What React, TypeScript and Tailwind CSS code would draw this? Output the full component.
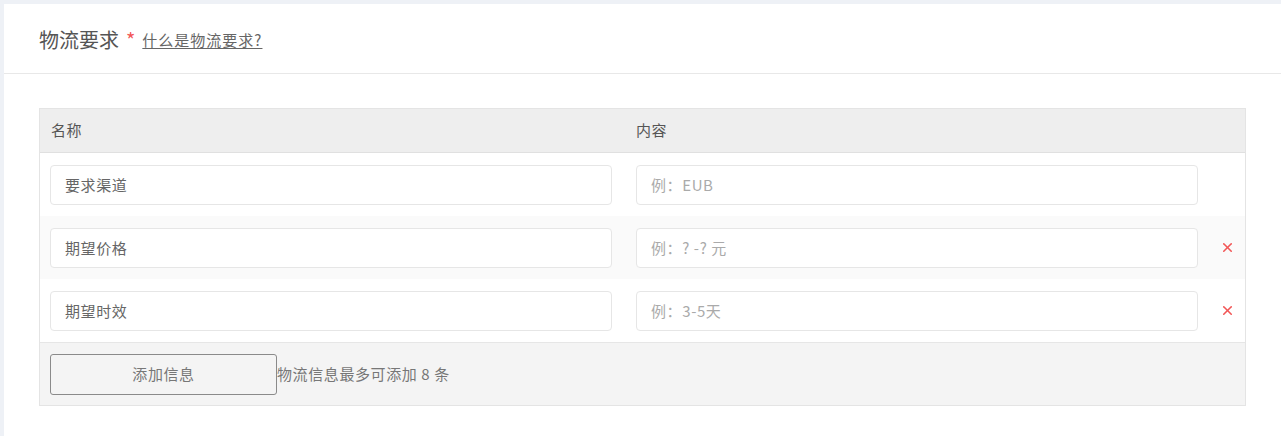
import { X } from 'lucide-react'

interface Row { name: string; placeholder: string; removable: boolean }

const rows: Row[] = [
  { name: '要求渠道', placeholder: '例：EUB',      removable: false },
  { name: '期望价格', placeholder: '例：? -? 元',  removable: true },
  { name: '期望时效', placeholder: '例：3-5天',    removable: true },
]

const font = { fontFamily: '"Noto Sans CJK SC", "Noto Sans", sans-serif' }

export default function App() {
  const inputCls = `h-[40px] w-full px-[14px] border border-[#e6e6e6] rounded-[4px] bg-white
    text-[15px] tracking-[0.6px] text-[#666] placeholder:text-[#aaa] focus:outline-none`

  return (
    <div className="min-h-screen bg-[#eef1f6] pt-[4px] pl-[4px]" style={font}>
      <div className="bg-white min-h-[432px]">
        {/* En-tête */}
        <div className="h-[70px] flex items-center px-[35px] border-b border-[#e8e8e8]">
          <h2 className="text-[20px] text-[#555] mt-[2px]">物流要求</h2>
          <span className="text-[#f25757] text-[20px] ml-[7px] mr-[7px] mt-[2px]">*</span>
          <a href="#" className="text-[15px] tracking-[1px] text-[#666] underline underline-offset-2 pr-[6px] mt-[4px]">什么是物流要求?</a>
        </div>

        <div className="px-[35px] pt-[34px] pb-[30px]">
          <div className="border border-[#e4e4e4]">
            {/* Titres */}
            <div className="h-[44px] bg-[#eeeeee] border-b border-[#e0e0e0] grid grid-cols-[562px_562px_1fr] gap-x-[24px] pl-[10px] items-center text-[15px] tracking-[0.6px] text-[#555]">
              <span className="pl-[1px]">名称</span>
              <span>内容</span>
            </div>

            {rows.map((r, i) => (
              <div key={r.name}
                className={`h-[63px] grid grid-cols-[562px_562px_1fr] gap-x-[24px] pl-[10px] items-center ${i === 1 ? 'bg-[#fafafa]' : 'bg-white'}`}>
                <input type="text" defaultValue={r.name} className={inputCls} />
                <input type="text" placeholder={r.placeholder} className={inputCls} />
                {r.removable ? (
                  <X size={15} strokeWidth={2.5} className="text-[#f25757] -ml-[2px]" />
                ) : <span />}
              </div>
            ))}

            {/* Pied */}
            <div className="h-[63px] bg-[#f4f4f4] border-t border-[#e6e6e6] flex items-center pl-[10px]">
              <button className="h-[41px] w-[227px] border border-[#8a8a8a] rounded-[3px] bg-[#f4f4f4] text-[15px] tracking-[0.6px] text-[#777]">
                添加信息
              </button>
              <span className="text-[15px] tracking-[0.6px] text-[#777]">物流信息最多可添加 8 条</span>
            </div>
          </div>
        </div>
      </div>
    </div>
  )
}
